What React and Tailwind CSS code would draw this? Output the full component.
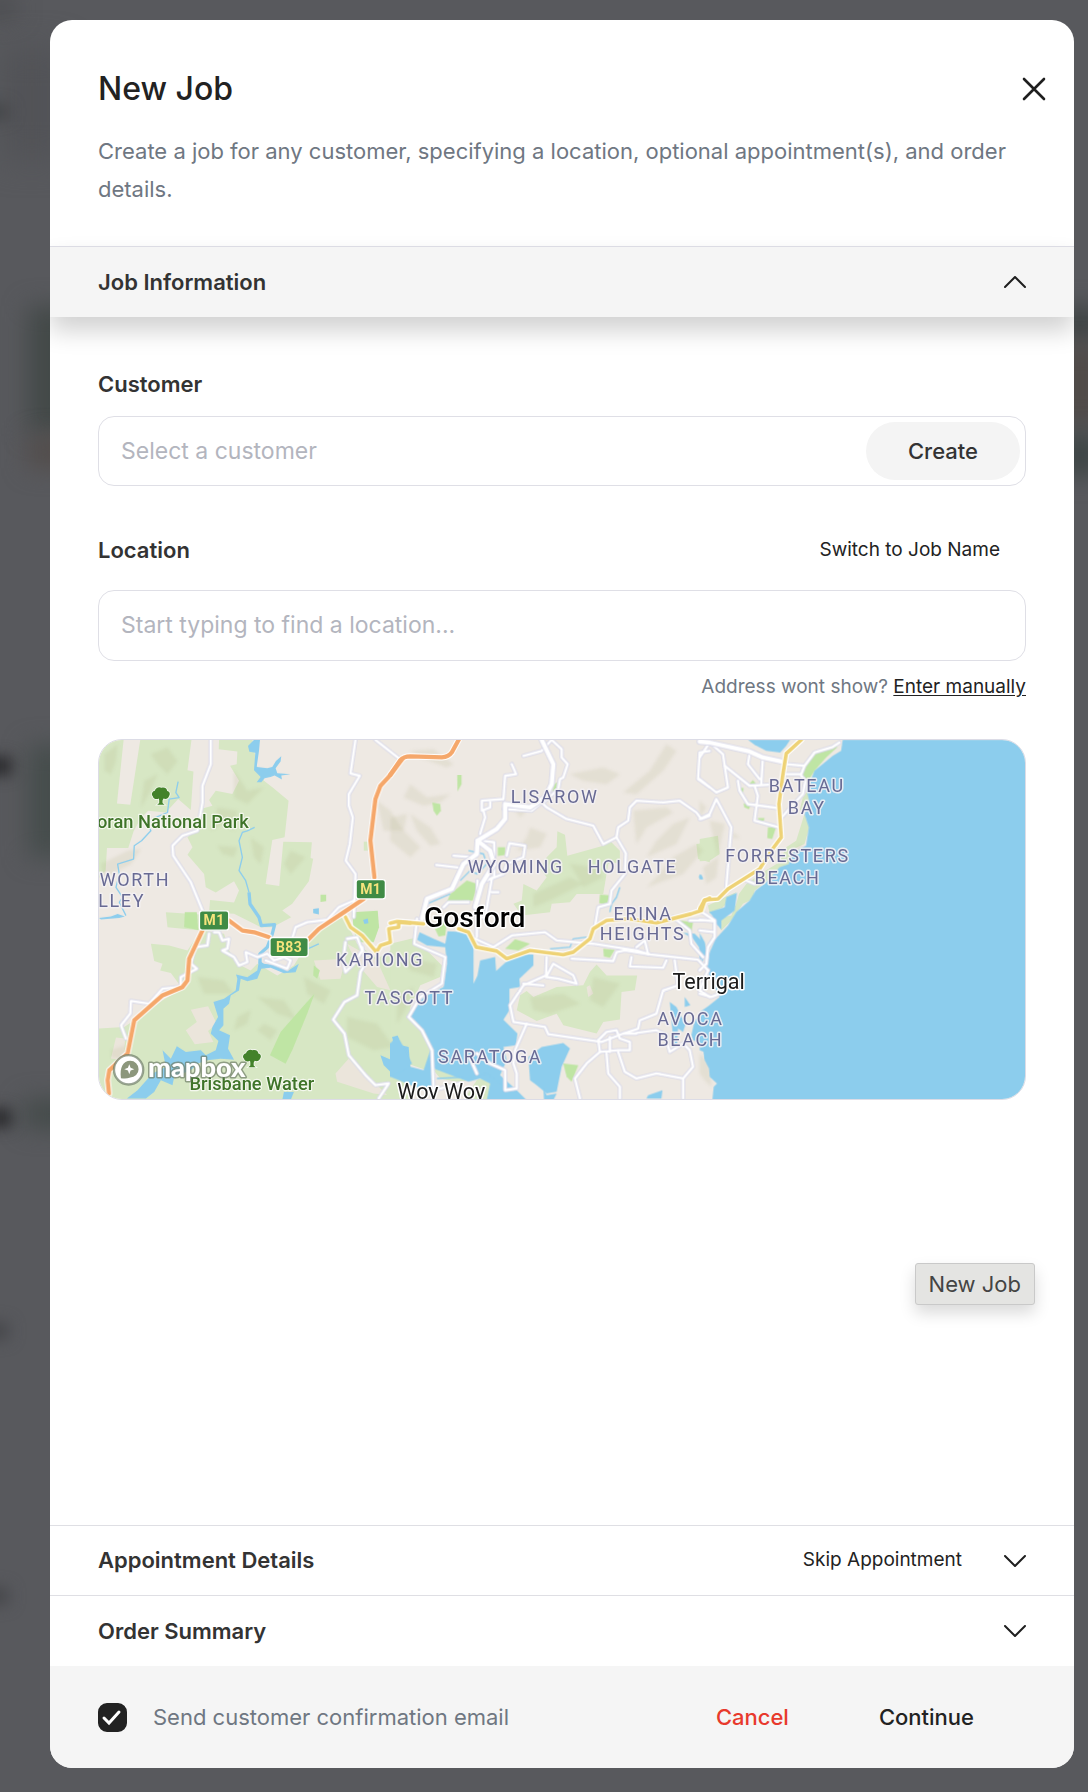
import { useState } from "react";

const LAND_PATCHES = {
  green: {
    a: [
      "M24,27H98L78,218L118,222L148,27H302L290,118L308,122L300,238L262,205L225,245L172,240L150,262L128,302L112,352L48,352L44,420L24,442Z",
      "M385,27H485L500,110L520,150L548,172L594,210L582,320L545,328L525,460L566,466L578,333L664,335L660,382L668,384L655,452L605,520L575,540L602,560L545,590L510,590L430,550L355,545L358,508L430,516L445,480L430,452L375,486L345,470L340,430L290,372L305,350L290,320L330,285L330,235L365,225L355,208L375,180L425,190L445,150L418,105L438,100L440,62L384,55Z",
      "M24,895L100,890L160,850L215,810L275,775L240,728L208,720L215,700L190,692L180,640L235,645L290,660L330,600L400,610L415,660L440,700L480,720L500,700L560,735L610,705L650,640L700,580L760,560L800,640L860,685L960,625V1110H24Z",
      "M225,545L330,552L330,600L230,590Z",
      "M820,333L832,333L832,360L820,360Z",
    ],
    b: [
      "M0,640L75,622L80,645L110,660L140,690L155,705L150,740L90,765L50,850L92,890L125,960L110,1020L50,1000L30,930L0,915Z",
      "M502,302L525,312L532,375L640,345L660,330L690,360L690,395L655,400L640,490L560,490L540,515L485,520L480,545L395,555L370,520L395,510L400,460L440,480L470,440L450,415L470,380L500,350Z",
      "M620,702L650,735L742,735L735,780L695,785L690,868L640,875L620,910L520,885L500,850L440,872L380,840L390,795L410,782L430,800L500,770L580,765L600,725Z",
      "M130,1020C160,990 190,1010 235,1050L200,1055L150,1045Z",
      "M0,1050L50,1075L20,1110H0Z",
      "M260,1050C290,1030 320,1060 300,1110H220Z",
      "M920,340L960,335V395L925,385Z",
    ],
    c: [
      "M0,325L55,315L60,370L30,390L0,392Z",
      "M315,250L330,290L315,340L270,360L270,400L215,440L165,480L160,505L130,520L95,570L65,600L50,565L95,555L110,520L118,490L140,460L190,425L240,395L260,350L290,330Z",
      "M75,500L110,485L70,530L30,550L25,525Z",
      "M325,180L330,225L300,240L310,200Z",
    ],
  },
  bright: {
    a: [
      "M672,790L650,850L605,960L585,1000L538,975L570,905L640,825Z",
      "M785,545L862,540L866,590L850,635L800,635L790,600Z",
      "M282,545L318,545L322,598L280,590Z",
      "M690,492L707,492L707,512L690,514Z",
      "M670,705L688,720L680,745L668,735Z",
    ],
    b: [
      "M180,490L230,450L262,460L248,510L170,515Z",
      "M132,590L150,565L170,575L165,615L145,618Z",
      "M201,134L214,134L214,160L202,182Z",
      "M630,492L658,494L652,522L628,518Z",
      "M345,655L375,626L420,640L385,660Z",
      "M126,215L150,220L152,240L140,255L130,240Z",
      "M520,1000L565,1005L545,1055L530,1040Z",
      "M870,570L910,575L905,605L880,590Z",
      "M640,655L675,658L660,682L642,678Z",
      "M490,160L502,155L498,180L488,182Z",
      "M323,350L345,350L345,373L323,376Z",
    ],
    c: [
      "M310,145L312,110L345,60L380,50L415,48L380,80L345,120L330,145Z",
      "M205,290L230,288L218,325L203,322Z",
      "M118,170L132,172L130,190L118,184Z",
      "M150,158L160,148L170,160Z",
      "M175,262L195,262L192,272L178,270Z",
      "M132,218L152,225L148,236L134,230Z",
    ],
  },
  beige: {
    a: [
      "M300,838L352,828L378,880L352,902L368,935L312,942L285,900L318,875Z",
      "M75,922L102,925L100,990L60,985Z",
      "M735,1030L775,985L830,1045L865,1070L890,1095L850,1090L740,1055Z",
      "M670,690L765,685L750,745L690,748Z",
      "M770,640L860,690L900,780L860,770L800,700Z",
    ],
    b: ["M590,770L600,765L610,790L595,800Z"],
    c: [],
  },
};

const SHADING = {
  a: [
    "M40,70L80,40L75,90L60,130L40,120Z",
    "M180,70L230,50L260,90L230,130L200,100Z",
    "M30,400L110,360L150,355L120,400L70,425L40,450Z",
    "M160,150L200,130L180,180L150,230Z",
    "M430,120L470,180L520,170L470,220L430,200Z",
    "M380,230L440,240L430,300L400,280L360,300Z",
    "M480,320L520,350L510,400L490,380Z",
    "M380,345L440,350L430,380L395,370Z",
    "M600,360L645,380L600,430L580,400Z",
    "M320,740L400,750L430,790L340,790Z",
    "M500,800L580,810L620,870L560,850Z",
    "M770,860L860,880L910,950L850,960L770,920Z",
    "M440,860L480,840L470,880L430,900Z",
    "M860,210L900,240L940,300L880,300Z",
    "M60,960L120,940L110,990L60,980Z",
    "M640,740L720,780L700,820L650,790Z",
    "M520,880L560,900L540,930L500,900Z",
  ],
  b: [
    "M60,160L110,200L180,190L150,215L100,225L40,200Z",
    "M60,250L120,290L150,340L120,345L80,300Z",
    "M0,260L50,250L40,300L90,350L60,380L0,330Z",
    "M60,60L130,55L190,100L170,110L90,80Z",
    "M540,130L640,110L690,130L650,160L580,150Z",
    "M780,120L830,40L860,60L820,120L740,190L700,185Z",
    "M730,240L830,230L850,245L770,290L740,340Z",
    "M850,280L900,260L860,340L770,380L800,330Z",
    "M800,440L850,380L920,340L940,360L880,430L770,470Z",
    "M420,290L470,310L450,350L380,360L410,320Z",
    "M370,230L410,240L390,260Z",
    "M430,490L540,440L580,460L480,510L430,530Z",
    "M540,400L620,410L640,440L580,470Z",
    "M420,800L520,790L570,820L480,850L430,840Z",
    "M610,740L690,760L640,830L600,810Z",
    "M40,680L140,700L130,740L60,720Z",
    "M20,800L70,770L50,830L20,880Z",
  ],
  c: [
    "M0,210L20,230L0,260Z",
    "M30,270L75,280L60,350L50,440L20,460L10,410L55,380Z",
    "M100,305L122,322L98,322Z",
    "M265,390L300,340L310,350L280,400Z",
    "M0,970L30,1000L35,1070L15,1050L0,1030Z",
  ],
};

const WATER = {
  a: [
    "M472,45L490,27H508L505,60L498,108L530,112L545,108L556,90L572,76L570,92L555,112L560,127L600,130L572,134L574,146L552,134L540,138L522,142L512,154L498,154L510,138L490,118L494,65L476,62Z",
    "M505,690L520,700L560,705L590,722L625,700L615,725L580,728L540,712L512,715L500,745L470,752L450,745L445,780L420,795L415,820L398,835L398,885L385,900L418,915L412,955L430,988L390,985L350,990L320,1000L300,1020L250,1040L245,1065L210,1050L190,1085L165,1105H108L140,1080L185,1030L225,1010L215,960L240,985L258,948L285,965L330,960L345,975L375,960L383,932L360,910L365,890L382,860L368,815L400,805L435,780L440,745L436,732L470,740L500,720Z",
    "M24,562L60,558L80,550L102,558L85,562L30,567Z",
    "M905,920L922,916L932,945L955,950L962,1040L935,1042L905,1030L880,1005L870,975L905,990L920,975Z",
    "M668,535L685,533L685,552L668,548Z",
    "M818,568L832,564L834,578L822,580Z",
    "M580,1085L610,1085L600,1110H575Z",
  ],
  b: [
    "M88,605L130,625L165,640L172,602L235,605L250,640V760L262,735L270,690L315,680L318,722L375,670L430,672L430,705L388,745L390,770L358,775V840L340,868L382,910L378,945L340,950L350,990L330,1035L380,1080L410,1110H290L300,1060L270,1045L235,1055L130,1015L130,1065L100,1080L0,1040V990L40,975L60,1010L100,1020L120,960L95,900L55,860L75,830L100,800L160,770L170,700L165,650L110,645L80,628Z",
    "M0,940L20,916L40,950L65,1000L40,1020L0,1040Z",
    "M415,980L455,950L520,938L540,955L515,1010L500,1085L470,1090L440,1065L420,1050Z",
    "M775,1095L818,1080L815,1105H770Z",
    "M880,607L915,610L945,640V680L930,690L928,650L910,625Z",
    "M905,915L915,870L940,850L960,835V1005L945,985L940,940L910,930Z",
    "M840,815L860,830L875,860L890,875L880,905L865,895L862,950L850,960L848,900Z",
    "M885,800L902,825L885,830Z",
    "M927,438L935,432L940,446L930,447Z",
    "M460,1075L470,1095L500,1090L490,1110H462Z",
  ],
  c: [
    "M430,27H980V1110H38L42,1070L52,1060L30,1040L28,1015L15,990L12,965L0,960V845L25,828L60,800L50,780L22,720L28,670L48,625L85,585L110,545L150,510L168,480L200,455L240,410L268,400L275,370L320,345L328,290L315,250L330,215L322,180L345,120L400,75L425,60Z",
    "M145,27H272L260,45L242,65L200,60L165,42Z",
    "M80,500L112,487L105,540L65,570L65,597L50,580L38,555L28,545L75,530Z",
    "M0,608L15,635L20,668L8,695L2,670Z",
  ],
};

const STREAMS = {
  a: [
    "M262,152L255,185L265,200L235,205L230,245L190,262L170,280L180,300L152,330L130,345L128,385L80,400L85,430L75,470L95,500L85,515L105,555",
    "M492,290L470,300L455,305L445,330L455,380L445,420L465,450L475,485",
    "M640,660L685,640",
  ],
  b: [
    "M235,360L280,370L290,400L260,430L240,420L210,450",
    "M480,655L540,650L550,625L590,620",
    "M690,470L680,500L665,520L660,545",
    "M110,520L180,490",
    "M140,1045L240,1040L290,1030L330,1060L380,1085",
  ],
  c: ["M0,432L8,445"],
};

const RIVER = "M475,485L478,520L505,560L512,585L552,582L545,610L530,650L508,670L508,700";

const MINOR = {
  a: [
    "M360,27L360,100L335,165V215L320,300L275,315L245,345L247,375L300,455L335,540",
    "M795,27L780,128L808,135L775,190V225L787,260L778,340L766,390L795,430L790,560",
    "M855,27L925,82",
    "M370,605L385,605L395,630L415,625L410,655L395,660L430,680L445,705L470,695L465,665L500,680L530,670L550,690L580,680L600,690L590,715L525,690",
    "M355,610L350,645L312,650L300,700L318,715L270,740V770L215,775L175,820L120,812L118,850L90,885L105,925",
    "M600,640L615,590L650,575L710,568L745,530L790,510L790,545",
    "M770,625L800,620L815,660L790,700L765,725L758,690L765,635",
    "M815,650L825,700L810,725L800,795L762,815L728,868L762,910L775,975L825,1035L855,1065L895,1060L865,1105",
  ],
  b: [
    "M400,75L455,60L485,27",
    "M485,27L515,55L515,80L533,100L520,140L510,145L505,175L460,215",
    "M365,100L378,130L345,135L340,205L275,210L275,240L300,230L300,215M280,240L285,260L270,310",
    "M340,235L425,240L455,215L470,230L530,265L610,285L640,340L680,320L708,368L705,430L665,480L660,520L625,530L615,590",
    "M680,320L685,290L715,270L720,230L740,210L820,215L870,210L920,245L935,265L960,255",
    "M960,60L930,65L925,145L960,170",
    "M190,375L250,380M138,403L215,412M350,375L358,338L405,345L400,380L350,400L340,430L275,455",
    "M275,330L312,335L312,440L275,455M305,485H325M260,620L262,450M305,445L285,560L262,560",
    "M235,515L175,515L160,530",
    "M255,625L310,650L365,615L465,605L500,630L610,640L740,660L780,672L925,688L955,720",
    "M470,680L468,735L400,765L360,825L370,875L465,890L475,912L635,935L700,910L740,910",
    "M468,740L490,700L550,735L560,760L505,745L470,740M400,760L460,765",
    "M545,685L670,692L680,665L705,660L780,672M725,680L720,708L820,712L830,690",
    "M740,650L765,630L775,672M900,570H960M850,560L900,600L905,640L940,680",
    "M700,910L745,895L750,870L800,850L820,780L865,765L855,690M740,908L800,900L830,915",
    "M650,905L625,930L630,965L685,960L720,960L720,935L690,925L680,900L650,905M660,920V965",
    "M630,965L590,1000L555,1045L570,1105M650,970L655,1030L690,1070L690,1105M685,965L705,1025L740,1045L800,1030L880,1045L910,1010L900,960L880,940L840,965L830,930M880,1045V1105",
    "M80,565L72,640L165,680L155,760L90,800L55,860L95,900L125,960L130,1080L210,1060",
    "M260,970L300,1000L345,1020L345,1080L380,1075L380,1030L370,1000L375,960L410,880M240,985L260,1030",
    "M955,720L930,780L960,800",
  ],
  c: [
    "M30,35L70,70L85,170L50,185L0,145M0,265L30,250L50,205L95,290L80,470",
    "M30,35L0,80M75,105L150,165L235,160M150,70L145,100L180,145M190,80L185,160",
    "M115,150L120,180L145,220L235,232M165,165L175,195L165,270L240,290",
    "M260,100L315,105L345,65L400,48L420,35M260,130L305,130L315,105M305,135L318,150L310,190L260,245L242,265",
    "M140,450L165,460M0,540L45,570L45,620L25,650L20,700L0,720M0,568L40,572M0,600L45,605",
    "M0,790L35,800L60,790",
  ],
};

const MAJOR = {
  a: [],
  b: [
    "M455,27L490,100L485,160L465,200L420,230L345,220L345,265L320,295L262,330L260,370L220,400L185,475L110,505L95,565",
    "M262,330L300,360L312,400L275,460L255,530",
  ],
  c: ["M0,32L30,35L150,62L190,80L245,92"],
};

const YELLOW = {
  a: ["M765,560L780,590L815,615L858,665L870,645L900,635L895,595L925,590L925,575L960,578"],
  b: ["M0,578L20,573L100,580M205,595L235,605L258,650L320,662L350,685L420,660L520,673L550,665L600,625L610,595L650,570L720,565L800,577L905,550L935,540L945,510L960,503"],
  c: ["M305,27L260,68L250,130L238,220L245,320L215,360L180,415L85,475L55,505L15,508L0,535"],
};

const ORANGE = {
  a: [
    "M935,85L895,138L870,165L855,205L840,330L852,440",
    "M820,505L760,545L685,595L650,630M535,620L490,605L455,600L415,570M335,600L295,685L290,750L275,770L215,795L130,870L110,970L55,1020L50,1050L54,1090",
  ],
  b: ["M0,132L30,88Q40,76 60,76L155,79Q175,78 185,64L208,22"],
  c: [],
};

const OFFSETS = [
  ["a", "translate(-24 -27)"],
  ["b", "translate(876 -27)"],
  ["c", "translate(1806 -27)"],
];

function Layer({ paths, ...rest }) {
  return (
    <g {...rest}>
      {OFFSETS.map(([key, transform]) => (
        <g key={key} transform={transform}>
          {paths[key].map((d) => (
            <path key={d} d={d} />
          ))}
        </g>
      ))}
    </g>
  );
}

function Roads({ paths, color, casing, width, edge }) {
  return (
    <g fill="none" strokeLinejoin="round" strokeLinecap="round">
      <Layer paths={paths} stroke={casing} strokeWidth={width + edge} />
      <Layer paths={paths} stroke={color} strokeWidth={width} />
    </g>
  );
}

const SUBURBS = [
  [1370, 190, "LISAROW"],
  [1253, 399, "WYOMING"],
  [1604, 399, "HOLGATE"],
  [1636, 541, "ERINA"],
  [1634, 603, "HEIGHTS"],
  [2128, 158, "BATEAU"],
  [2128, 222, "BAY"],
  [2070, 368, "FORRESTERS"],
  [2070, 432, "BEACH"],
  [845, 679, "KARIONG"],
  [933, 795, "TASCOTT"],
  [1176, 970, "SARATOGA"],
  [1778, 857, "AVOCA"],
  [1778, 920, "BEACH"],
  [108, 438, "WORTH"],
  [68, 501, "LLEY"],
];

function Shield({ x, y, width, label }) {
  return (
    <g>
      <rect x={x} y={y} width={width} height="58" rx="8" fill="#3f8b45" stroke="#fff" strokeWidth="4" />
      <text x={x + width / 2} y={y + 44} textAnchor="middle" fontSize="42" fontWeight="700" fill="#f5e37d" letterSpacing="1">
        {label}
      </text>
    </g>
  );
}

function Tree({ x, y }) {
  return (
    <path
      transform={`translate(${x} ${y})`}
      d="M-6,8C-12,12 -22,10 -24,2C-30,-4 -26,-14 -18,-15C-16,-24 -6,-28 2,-24C12,-27 19,-21 19,-14C27,-13 29,-4 24,2C22,9 14,11 8,8L5,14V22L11,27H-11L-5,22V14Z"
      fill="#43822a"
      stroke="#f4f8ee"
      strokeWidth="5"
      paintOrder="stroke"
    />
  );
}

function LocationMap() {
  return (
    <div className="mt-[38px] h-[361px] overflow-hidden rounded-3xl border border-[#dcdce6]">
      <svg
        className="block h-full w-full"
        viewBox="0 0 2784 1080"
        preserveAspectRatio="xMidYMid slice"
        role="img"
        aria-label="Map of Gosford and surrounds"
        fontFamily="Roboto, 'Liberation Sans', sans-serif"
      >
        <defs>
          <filter id="relief" x="-5%" y="-5%" width="110%" height="110%">
            <feGaussianBlur stdDeviation="5" />
          </filter>
        </defs>
        <rect width="2784" height="1080" fill="#eee9e3" />
        <Layer paths={LAND_PATCHES.green} fill="#d7e7c4" />
        <Layer paths={LAND_PATCHES.beige} fill="#ebe5db" />
        <Layer paths={SHADING} fill="#a9a77a" fillOpacity="0.15" filter="url(#relief)" />
        <Layer paths={LAND_PATCHES.bright} fill="#bfe5a4" />
        <Layer paths={WATER} fill="#8ccded" />
        <Layer paths={STREAMS} fill="none" stroke="#8ccded" strokeWidth="4" strokeLinejoin="round" />
        <path d={RIVER} transform="translate(-24 -27)" fill="none" stroke="#8ccded" strokeWidth="10" strokeLinejoin="round" />
        <Roads paths={MINOR} color="#fff" casing="#d9d9e8" width={7} edge={6} />
        <Roads paths={MAJOR} color="#fff" casing="#d9d9e8" width={13} edge={6} />
        <Roads paths={YELLOW} color="#eed275" casing="#fff" width={11} edge={7} />
        <Roads paths={ORANGE} color="#f5a76a" casing="#fff" width={13} edge={6} />

        <g paintOrder="stroke" strokeLinejoin="round">
          <g fill="#686a94" stroke="#f3f1f3" strokeOpacity="0.85" strokeWidth="9" fontSize="54" letterSpacing="5" textAnchor="middle">
            {SUBURBS.map(([x, y, name]) => (
              <text key={name + y} x={x} y={y}>
                {name}
              </text>
            ))}
          </g>
          <g fill="#3f7429" stroke="#f4f8ee" strokeWidth="7" fontSize="55" fontWeight="500">
            <text x="450" y="264" textAnchor="end">
              oran National Park
            </text>
            <text x="272" y="1054">Brisbane Water</text>
          </g>
          <g stroke="#fff" strokeWidth="9" fill="#1c1c1c">
            <text x="977" y="562" fontSize="85" fontWeight="500" fill="#000">
              Gosford
            </text>
            <text x="1724" y="750" fontSize="65">
              Terrigal
            </text>
            <text x="897" y="1080" fontSize="65">
              Woy Woy
            </text>
          </g>
        </g>
        <Tree x={186} y={168} />
        <Tree x={460} y={957} />
        <Shield x={302} y={514} width={88} label="M1" />
        <Shield x={773} y={420} width={88} label="M1" />
        <Shield x={514} y={594} width={115} label="B83" />

        <g>
          <circle cx="89" cy="992" r="44" fill="#fff" stroke="#6f7d68" strokeOpacity="0.7" strokeWidth="7" />
          <path d="M66,1017C62,985 72,965 94,965A25,25 0 0 1 94,1015C84,1019 76,1019 66,1017Z" fill="#8c977c" />
          <path d="M91,975L95,986L106,990L95,994L91,1005L87,994L76,990L87,986Z" fill="#fff" />
          <text
            x="147"
            y="1014"
            fontSize="82"
            fontWeight="900"
            fontFamily="Lato, sans-serif"
            fill="#fff"
            stroke="#6f7d68"
            strokeOpacity="0.7"
            strokeWidth="9"
            strokeLinejoin="round"
            paintOrder="stroke"
          >
            mapbox
          </text>
        </g>
      </svg>
    </div>
  );
}

function Chevron({ up }) {
  return (
    <svg className="h-3 w-[22px] shrink-0" viewBox="1 0 22 12" fill="none" stroke="#1f1f1f" strokeWidth="2" strokeLinecap="round" strokeLinejoin="round" aria-hidden="true">
      <path d={up ? "M2 11L12 1L22 11" : "M2 1L12 11L22 1"} />
    </svg>
  );
}

function Backdrop() {
  return (
    <div className="absolute inset-0 overflow-hidden" aria-hidden="true">
      <div className="absolute -left-4 top-0 h-4 w-8 bg-[#47484b] blur-md" />
      <div className="absolute left-0 top-12 h-28 w-16 bg-[#525357] blur-lg" />
      <div className="absolute -left-4 top-[106px] h-3 w-6 bg-[#3e3f42] blur-sm" />
      <div className="absolute left-7 top-[306px] h-32 w-20 bg-[#434948] blur-md" />
      <div className="absolute left-7 top-[436px] h-8 w-20 bg-[#534d4b] blur-md" />
      <div className="absolute -left-3 top-[758px] h-4 w-6 bg-[#202022] blur-sm" />
      <div className="absolute left-7 top-[745px] h-28 w-20 bg-[#464d4c] blur-md" />
      <div className="absolute -left-3 top-[1110px] h-4 w-6 bg-[#202022] blur-sm" />
      <div className="absolute left-6 top-[1100px] h-7 w-20 bg-[#434a49] blur-md" />
      <div className="absolute -left-4 top-[1323px] h-4 w-6 bg-[#434448] blur-sm" />
      <div className="absolute -left-4 top-[1588px] h-4 w-6 bg-[#434448] blur-sm" />
      <div className="absolute -right-3 top-[308px] h-8 w-10 bg-[#3c4242] blur-md" />
      <div className="absolute -right-3 top-[345px] h-20 w-10 bg-[#504a47] blur-md" />
      <div className="absolute -right-3 top-[435px] h-10 w-10 bg-[#3c4444] blur-md" />
    </div>
  );
}

export default function App() {
  const [send, setSend] = useState(true);
  return (
    <div className="relative flex min-h-screen bg-[#58595d] pb-6 pl-[50px] pr-3.5 pt-5 font-['Inter',sans-serif] text-[#222]">
      <Backdrop />
      <main role="dialog" aria-labelledby="dialog-title" className="relative flex min-w-0 flex-1 flex-col overflow-hidden rounded-[22px] bg-white">
        <header className="px-12 pb-[38px] pt-12">
          <div className="-mr-5 flex items-center justify-between">
            <h1 id="dialog-title" className="text-[32px] font-medium leading-[42px]">New Job</h1>
            <button type="button" aria-label="Close">
              <svg className="h-6 w-6" viewBox="0 0 24 24" fill="none" stroke="#1f1f1f" strokeWidth="2.6" strokeLinecap="round" aria-hidden="true">
                <path d="M2 2L22 22M22 2L2 22" />
              </svg>
            </button>
          </div>
          <p className="mt-[22px] text-[22px] leading-[38px] text-[#6f7782]">
            Create a job for any customer, specifying a location, optional appointment(s), and order details.
          </p>
        </header>

        <button type="button" aria-expanded="true" className="relative flex h-[71px] items-center justify-between border-t border-[#dcdce4] bg-[#f5f5f5] px-12 text-[22px] font-semibold text-[#333] shadow-[0_14px_24px_rgba(0,0,0,0.18)]">
          Job Information
          <Chevron up />
        </button>

        <section className="relative flex-1 px-12 pt-[51px]">
          <label htmlFor="customer" className="block text-[22px] font-semibold leading-8 text-[#333]">Customer</label>
          <div className="mt-4 flex h-[70px] items-center rounded-2xl border border-[#dfdfe6] pl-[22px] pr-[5px]">
            <input id="customer" placeholder="Select a customer" className="min-w-0 flex-1 bg-transparent text-[23px] outline-none placeholder:text-[#b3b5be]" />
            <button type="button" className="h-[58px] w-[154px] rounded-full bg-[#f4f4f4] text-[22px] font-medium text-[#333]">Create</button>
          </div>

          <div className="mt-12 flex items-center justify-between pr-[26px]">
            <label htmlFor="location" className="text-[22px] font-semibold leading-8 text-[#333]">Location</label>
            <button type="button" className="text-[19px] leading-8">Switch to Job Name</button>
          </div>
          <div className="mt-6 flex h-[71px] items-center rounded-2xl border border-[#dfdfe6] px-[22px]">
            <input id="location" placeholder="Start typing to find a location..." className="min-w-0 flex-1 bg-transparent text-[23px] outline-none placeholder:text-[#b3b5be]" />
          </div>
          <p className="mt-3 text-right text-[19px] leading-7 text-[#6f7782]">
            Address wont show?{" "}
            <a href="#manual" className="text-[#222] underline underline-offset-2">Enter manually</a>
          </p>

          <LocationMap />

          <div role="tooltip" className="absolute bottom-[220px] right-[39px] rounded-[3px] border border-[#c9c9c9] bg-[#e4e4e2] px-[13px] py-1 text-[22px] leading-8 text-[#444] shadow-[0_8px_16px_rgba(0,0,0,0.15)]">
            New Job
          </div>
        </section>

        <div className="flex h-[70px] items-center border-t border-[#dfdfe4] px-12">
          <h2 className="flex-1 text-[22px] font-semibold text-[#333]">Appointment Details</h2>
          <button type="button" className="mr-[42px] text-[19px]">Skip Appointment</button>
          <button type="button" aria-label="Expand appointment details">
            <Chevron />
          </button>
        </div>
        <button type="button" aria-expanded="false" className="flex h-[71px] items-center justify-between border-t border-[#dfdfe4] px-12 text-[22px] font-semibold text-[#333]">
          Order Summary
          <Chevron />
        </button>

        <footer className="flex h-[102px] items-center bg-[#f5f5f5] pl-12 pr-[100px]">
          <label className="flex flex-1 items-center text-[22px] text-[#6f7782]">
            <span className="relative mr-[26px] flex h-[29px] w-[29px]">
              <input
                type="checkbox"
                checked={send}
                onChange={() => setSend(!send)}
                className="peer h-full w-full appearance-none rounded-[9px] border-2 border-[#222] checked:bg-[#222]"
              />
              <svg className="pointer-events-none absolute inset-0 hidden peer-checked:block" viewBox="0 0 29 29" fill="none" stroke="#fff" strokeWidth="3" strokeLinecap="round" aria-hidden="true">
                <path d="M6 15L11 20L21 9" />
              </svg>
            </span>
            Send customer confirmation email
          </label>
          <button type="button" className="mr-[90px] text-[22px] font-medium text-[#e8392c]">Cancel</button>
          <button type="button" className="text-[22px] font-medium">Continue</button>
        </footer>
      </main>
    </div>
  );
}
